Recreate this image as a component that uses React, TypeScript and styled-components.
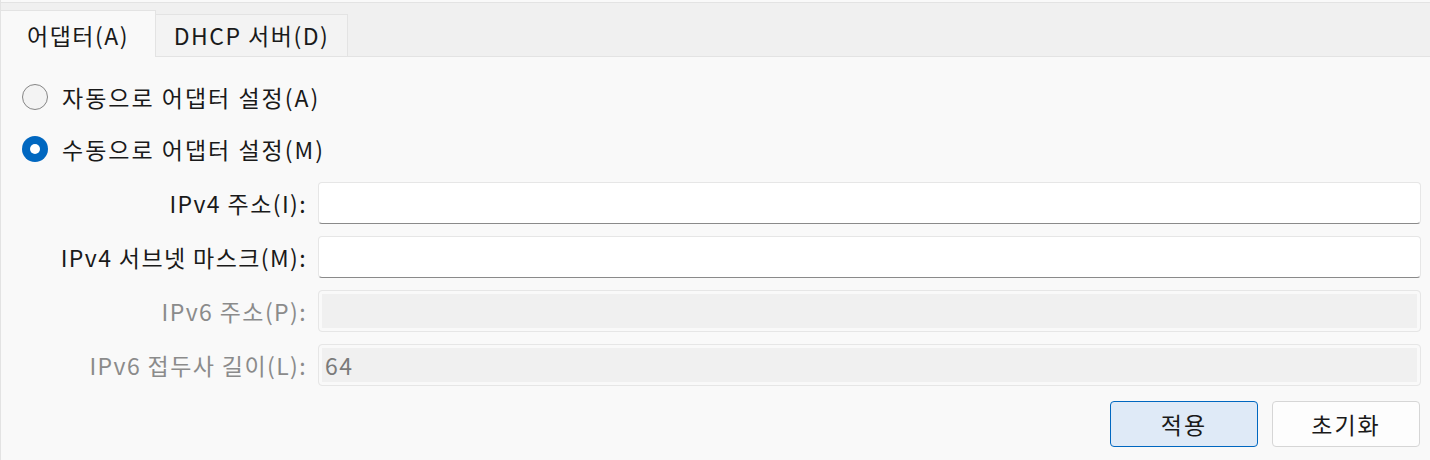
import styled, { createGlobalStyle } from "styled-components";

const Global = createGlobalStyle`
  html, body {
    margin: 0;
    padding: 0;
    background: #f9f9f9;
  }
  body {
    font-family: "Noto Sans CJK KR", "Noto Sans", sans-serif;
    letter-spacing: 1.5px;
  }
`;

const Window = styled.div`
  width: 1430px;
  height: 460px;
  box-sizing: border-box;
  background: #f9f9f9;
  border-left: 1px solid #e3e3e3;
  padding-top: 2px;
  display: flex;
  flex-direction: column;
  overflow: hidden;
  color: #1a1a1a;
`;

const TabStrip = styled.div`
  height: 55px;
  box-sizing: border-box;
  background: #f0f0f0;
  border-top: 1px solid #e3e3e3;
  border-bottom: 1px solid #e3e3e3;
  display: flex;
  align-items: flex-end;
`;

const Tab = styled.div<{ $active?: boolean }>`
  box-sizing: border-box;
  display: flex;
  align-items: center;
  justify-content: center;
  font-size: 23px;
  line-height: 1;
  border-top: 1px solid #e3e3e3;
  border-right: 1px solid #e3e3e3;
  background: ${(p) => (p.$active ? "#f9f9f9" : "#f3f3f3")};
  height: ${(p) => (p.$active ? "47px" : "42px")};
  width: ${(p) => (p.$active ? "155px" : "192px")};
  margin-bottom: ${(p) => (p.$active ? "-1px" : "0")};
  padding-top: ${(p) => (p.$active ? "3px" : "0")};
`;

const Content = styled.div`
  padding: 14px 9px 0 21px;
  display: flex;
  flex-direction: column;
`;

const RadioRow = styled.label`
  height: 52px;
  display: flex;
  align-items: center;
  gap: 14px;
  font-size: 23px;
  letter-spacing: 2px;
`;

const RadioDot = styled.span<{ $checked?: boolean }>`
  width: 26px;
  height: 26px;
  box-sizing: border-box;
  border-radius: 50%;
  flex: none;
  display: flex;
  align-items: center;
  justify-content: center;
  background: ${(p) => (p.$checked ? "#0067c0" : "#f3f3f3")};
  border: ${(p) => (p.$checked ? "none" : "1.5px solid #858585")};

  &::after {
    content: "";
    display: ${(p) => (p.$checked ? "block" : "none")};
    width: 10px;
    height: 10px;
    border-radius: 50%;
    background: #ffffff;
  }
`;

const Form = styled.div`
  margin-top: 7px;
  display: grid;
  grid-template-columns: 284px 1fr;
  column-gap: 12px;
  row-gap: 12px;
`;

const FieldLabel = styled.span<{ $disabled?: boolean }>`
  display: flex;
  align-items: center;
  justify-content: flex-end;
  font-size: 23px;
  letter-spacing: 1.4px;
  margin-right: -1px;
  color: ${(p) => (p.$disabled ? "#8b8b8b" : "#1a1a1a")};
`;

const Field = styled.div<{ $disabled?: boolean }>`
  height: 42px;
  box-sizing: border-box;
  border-radius: 4px;
  border: 1px solid #e6e6e6;
  display: flex;
  align-items: center;
  padding-left: 6px;
  font-size: 23px;
  color: #7a7a7a;
  ${(p) =>
    p.$disabled
      ? `
    background: #f0f0f0;
    box-shadow: inset 0 0 0 3px #f9f9f9;
  `
      : `
    background: #ffffff;
    border-bottom: 1px solid #8a8a8a;
  `}
`;

const Actions = styled.div`
  margin-top: 15px;
  display: flex;
  justify-content: flex-end;
  gap: 14px;
  padding-right: 1px;
`;

const Button = styled.button<{ $primary?: boolean }>`
  width: 148px;
  height: 46px;
  box-sizing: border-box;
  border-radius: 4px;
  font-family: inherit;
  font-size: 23px;
  letter-spacing: 2px;
  color: #1a1a1a;
  cursor: pointer;
  background: ${(p) => (p.$primary ? "#dfeaf7" : "#fdfdfd")};
  border: 1px solid ${(p) => (p.$primary ? "#0067c0" : "#d6d6d6")};
`;

const fields = [
  { label: "IPv4 주소(I):", value: "", disabled: false },
  { label: "IPv4 서브넷 마스크(M):", value: "", disabled: false },
  { label: "IPv6 주소(P):", value: "", disabled: true },
  { label: "IPv6 접두사 길이(L):", value: "64", disabled: true },
];

export default function App() {
  return (
    <>
      <Global />
      <Window>
        <TabStrip>
          <Tab $active>어댑터(A)</Tab>
          <Tab>DHCP 서버(D)</Tab>
        </TabStrip>
        <Content>
          <RadioRow>
            <RadioDot />
            자동으로 어댑터 설정(A)
          </RadioRow>
          <RadioRow>
            <RadioDot $checked />
            수동으로 어댑터 설정(M)
          </RadioRow>
          <Form>
            {fields.map((f) => (
              <>
                <FieldLabel key={f.label} $disabled={f.disabled}>
                  {f.label}
                </FieldLabel>
                <Field key={f.label + "-f"} $disabled={f.disabled}>
                  {f.value}
                </Field>
              </>
            ))}
          </Form>
          <Actions>
            <Button $primary>적용</Button>
            <Button>초기화</Button>
          </Actions>
        </Content>
      </Window>
    </>
  );
}
